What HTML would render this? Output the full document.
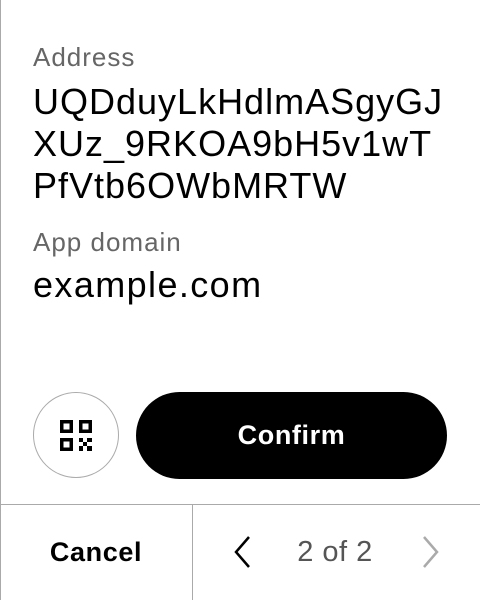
<!DOCTYPE html>
<html><head><style>
html,body{margin:0;padding:0;background:#fff;}
body{width:480px;height:600px;position:relative;overflow:hidden;font-family:"Liberation Sans",sans-serif;}
.lb{position:absolute;left:0;top:0;width:1px;height:600px;background:#aaa;}
.lbl{position:absolute;left:33px;font-size:26px;color:#666;letter-spacing:1px;}
.val{position:absolute;left:33px;font-size:36px;color:#000;line-height:42px;letter-spacing:1px;}
.qr{position:absolute;left:33px;top:392px;width:86px;height:86px;border:1px solid #aaa;border-radius:50%;box-sizing:border-box;}
.btn{position:absolute;left:136px;top:392px;width:311px;height:87px;background:#000;border-radius:44px;color:#fff;font-weight:bold;font-size:27px;text-align:center;line-height:87px;letter-spacing:0.6px;}
.hl{position:absolute;left:0;top:504px;width:480px;height:1px;background:#aaa;}
.vl{position:absolute;left:192px;top:504px;width:1px;height:96px;background:#aaa;}
.cancel{position:absolute;left:0;width:192px;top:504px;height:96px;line-height:96px;text-align:center;font-weight:bold;font-size:27px;letter-spacing:0.6px;}
.pg{position:absolute;left:270px;width:130px;top:504px;height:96px;line-height:96px;text-align:center;font-size:29px;color:#555;letter-spacing:0.5px;}
</style></head><body>
<div class="lb"></div>
<div class="lbl" style="top:42px;">Address</div>
<div class="val" style="top:81px;">UQDduyLkHdlmASgyGJ<br>XUz_9RKOA9bH5v1wT<br>PfVtb6OWbMRTW</div>
<div class="lbl" style="top:227px;">App domain</div>
<div class="val" style="top:264px;letter-spacing:1.4px;">example.com</div>
<div class="qr">
<svg width="86" height="86" viewBox="0 0 86 86" style="position:absolute;left:-1px;top:-1px">
<g fill="#000" fill-rule="evenodd">
<path d="M27 28h13v13H27zM30.5 31.5v6h6v-6z"/>
<path d="M46 28h13v13H46zM49.5 31.5v6h6v-6z"/>
<path d="M27 46h13v13H27zM30.5 49.5v6h6v-6z"/>
<rect x="46" y="46" width="4" height="4"/><rect x="54" y="46" width="5" height="4"/>
<rect x="50" y="50" width="4" height="4"/><rect x="46" y="54" width="4" height="5"/>
<rect x="54" y="54" width="5" height="5"/>
</g></svg>
</div>
<div class="btn">Confirm</div>
<div class="hl"></div><div class="vl"></div>
<div class="cancel">Cancel</div>
<svg style="position:absolute;left:232px;top:535px" width="22" height="34" viewBox="0 0 22 34"><path d="M17 2L4 17l13 15" fill="none" stroke="#000" stroke-width="2.5"/></svg>
<div class="pg">2 of 2</div>
<svg style="position:absolute;left:419px;top:535px" width="22" height="34" viewBox="0 0 22 34"><path d="M5 2l13 15L5 32" fill="none" stroke="#aaa" stroke-width="2.5"/></svg>
</body></html>
